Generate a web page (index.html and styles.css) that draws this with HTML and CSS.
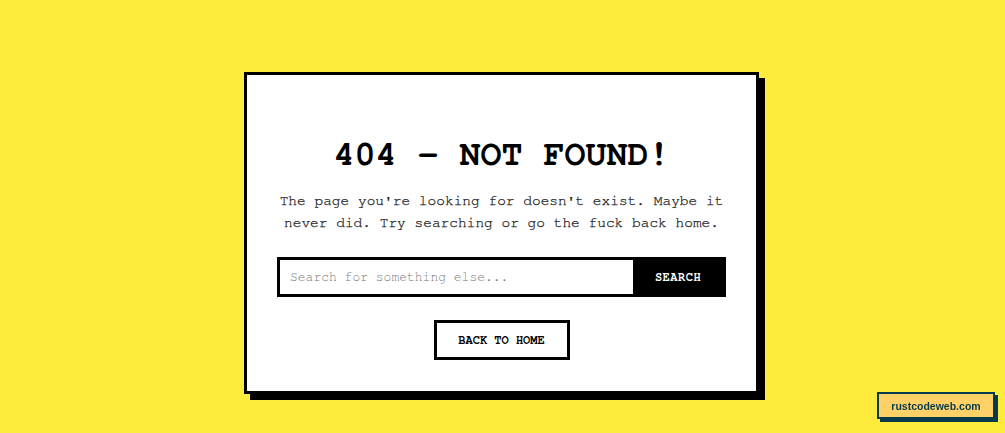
FILE: index.html
```html
<!DOCTYPE html>
<html lang="en">
<head>
<meta charset="utf-8">
<title>404 - Not Found</title>
<link rel="stylesheet" href="styles.css">
</head>
<body>
<main class="page">
  <section class="card">
    <h1 class="title">404 - NOT FOUND!</h1>
    <p class="message">The page you're looking for doesn't exist. Maybe it never did. Try searching or go the fuck back home.</p>
    <form class="search">
      <input class="search-input" type="text" placeholder="Search for something else...">
      <button class="search-btn" type="button">SEARCH</button>
    </form>
    <a class="home-btn" href="#">BACK TO HOME</a>
  </section>
</main>
<a class="badge" href="#">rustcodeweb.com</a>
</body>
</html>
```
FILE: styles.css
```css
* { box-sizing: border-box; }
html, body { margin: 0; padding: 0; }
body {
  background: #ffeb3b;
  font-family: "Nimbus Mono PS", "Nimbus Mono L", "FreeMono", "Liberation Mono", "Courier New", monospace;
  color: #000;
  height: 433px;
  overflow: hidden;
}
.page {
  display: flex;
  justify-content: center;
  padding-top: 72px;
  padding-right: 2px;
}
.card {
  width: 515px;
  height: 322px;
  background: #fff;
  border: 3px solid #000;
  box-shadow: 6px 6px 0 #000;
  padding: 60px 31px 0;
  display: flex;
  flex-direction: column;
  align-items: center;
  text-align: center;
}
.title {
  margin: 0;
  font-size: 35px;
  line-height: 40px;
  font-weight: bold;
  letter-spacing: 0;
}
.message {
  margin: 15px 0 0;
  font-size: 14.5px;
  line-height: 22px;
  color: #1a1a1a;
  -webkit-text-stroke: 0.25px #1a1a1a;
}
.search {
  margin: 23px 0 0;
  width: 449px;
  height: 40px;
  display: flex;
  border: 3px solid #000;
}
.search-input {
  flex: 1;
  border: none;
  outline: none;
  padding: 0 10px;
  font-family: inherit;
  font-size: 13px;
  color: #000;
  background: #fff;
}
.search-input::placeholder { color: #777; }
.search-btn {
  width: 90px;
  border: none;
  background: #000;
  color: #fff;
  font-family: inherit;
  font-weight: bold;
  font-size: 12px;
  letter-spacing: 0.5px;
  padding: 0;
}
.home-btn {
  margin-top: 23px;
  width: 136px;
  height: 40px;
  border: 3px solid #000;
  display: flex;
  align-items: center;
  justify-content: center;
  color: #000;
  text-decoration: none;
  font-weight: bold;
  font-size: 12px;
}
.badge {
  position: fixed;
  right: 10px;
  bottom: 14px;
  width: 118px;
  height: 27px;
  background: #ffd166;
  border: 2px solid #073b4c;
  box-shadow: 3px 3px 0 #073b4c;
  display: flex;
  align-items: center;
  justify-content: center;
  color: #073b4c;
  font-family: "Liberation Sans", Arial, sans-serif;
  font-weight: bold;
  font-size: 10.5px;
  text-decoration: none;
}
```
